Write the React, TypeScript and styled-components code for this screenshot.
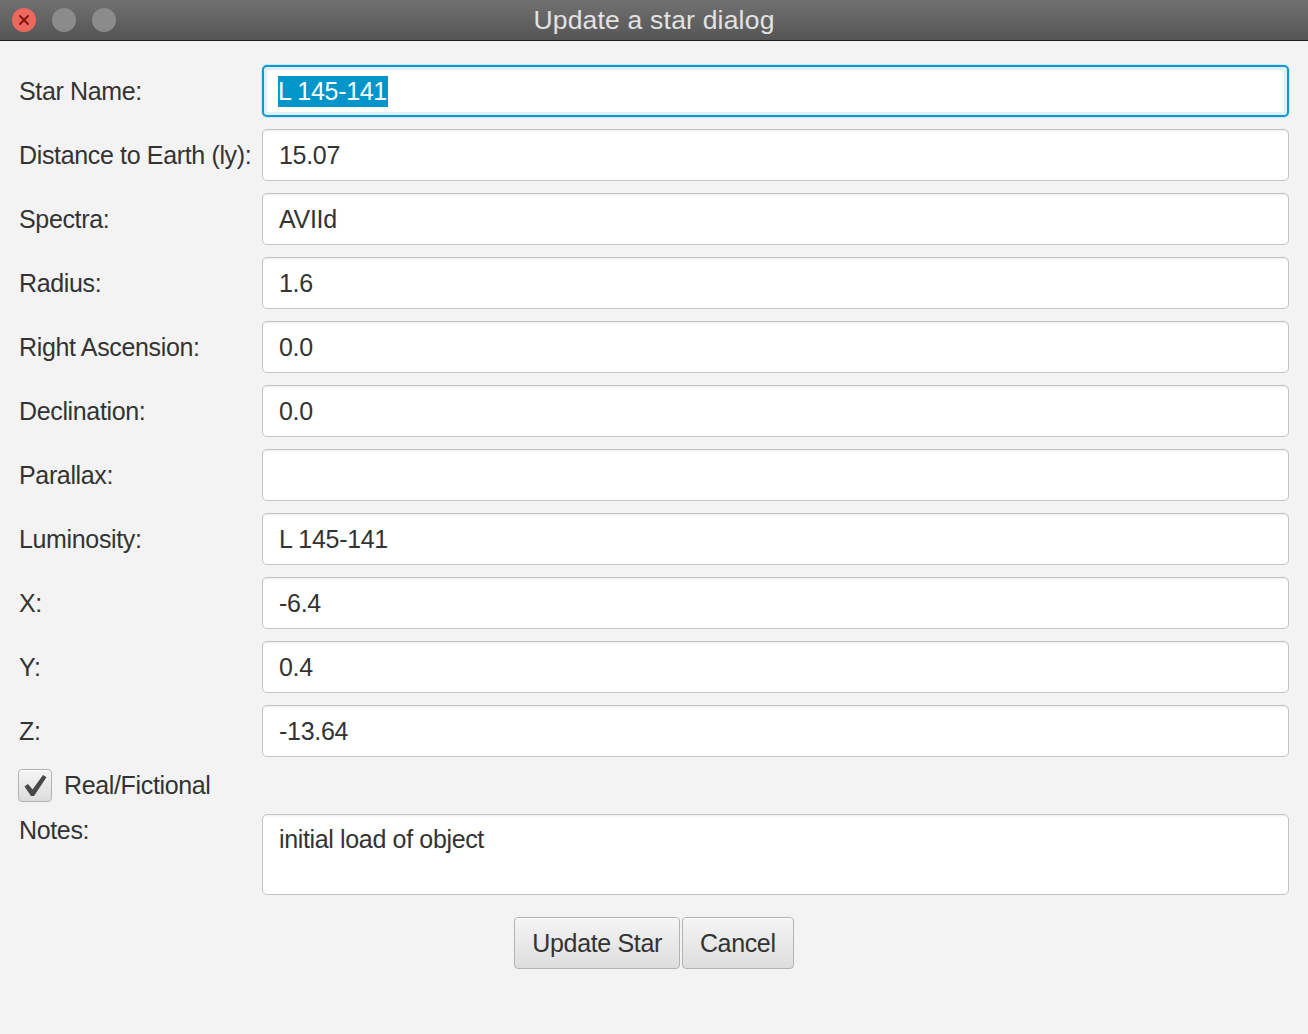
import React from "react";
import styled, { createGlobalStyle } from "styled-components";

const GlobalStyle = createGlobalStyle`
  html, body {
    margin: 0;
    padding: 0;
    background: #f3f3f3;
  }
  body {
    font-family: "Liberation Sans", Arial, sans-serif;
    color: #333333;
  }
`;

const fields = [
  { label: "Star Name:", value: "L 145-141", focused: true },
  { label: "Distance to Earth (ly):", value: "15.07" },
  { label: "Spectra:", value: "AVIId" },
  { label: "Radius:", value: "1.6" },
  { label: "Right Ascension:", value: "0.0" },
  { label: "Declination:", value: "0.0" },
  { label: "Parallax:", value: "" },
  { label: "Luminosity:", value: "L 145-141" },
  { label: "X:", value: "-6.4" },
  { label: "Y:", value: "0.4" },
  { label: "Z:", value: "-13.64" },
];

export default function App() {
  return (
    <>
      <GlobalStyle />
      <Window>
        <TitleBar>
          <Lights>
            <Light $close>
              <svg width="14" height="14" viewBox="0 0 14 14">
                <path d="M3 3 L11 11 M11 3 L3 11" stroke="#7e130c" strokeWidth="1.8" strokeLinecap="round" />
              </svg>
            </Light>
            <Light />
            <Light />
          </Lights>
          <Title>Update a star dialog</Title>
        </TitleBar>
        <Body>
          <FormGrid>
            {fields.map((f) => (
              <React.Fragment key={f.label}>
                <Label>{f.label}</Label>
                <Field $focused={f.focused}>
                  {f.focused ? <Selected>{f.value}</Selected> : f.value}
                </Field>
              </React.Fragment>
            ))}
            <CheckRow>
              <CheckBox>
                <svg width="25" height="23" viewBox="0 0 25 23">
                  <path d="M1.5 12.5 L5 10 L9.5 15.5 L20 1 L23.5 3.2 L11 22 L8 22 Z" fill="#484848" />
                </svg>
              </CheckBox>
              <CheckLabel>Real/Fictional</CheckLabel>
            </CheckRow>
            <Label $top>Notes:</Label>
            <NotesArea>initial load of object</NotesArea>
          </FormGrid>
          <ButtonBar>
            <Button>Update Star</Button>
            <Button>Cancel</Button>
          </ButtonBar>
        </Body>
      </Window>
    </>
  );
}

const Window = styled.div`
  width: 1308px;
  height: 1034px;
  display: flex;
  flex-direction: column;
  background: #f3f3f3;
`;

const TitleBar = styled.div`
  position: relative;
  height: 40px;
  flex-shrink: 0;
  display: flex;
  align-items: center;
  justify-content: center;
  background: linear-gradient(#717171, #555555);
  border-bottom: 1px solid #1e1e1e;
`;

const Lights = styled.div`
  position: absolute;
  left: 12px;
  top: 8px;
  display: flex;
  gap: 16px;
`;

const Light = styled.div<{ $close?: boolean }>`
  width: 24px;
  height: 24px;
  border-radius: 50%;
  background: ${(p) => (p.$close ? "#ec675c" : "#8b8b8b")};
  display: flex;
  align-items: center;
  justify-content: center;
`;

const Title = styled.div`
  font-size: 26.5px;
  color: #e2e2e2;
  letter-spacing: 0.2px;
  margin-top: 1px;
`;

const Body = styled.div`
  padding: 24px 19px 0 19px;
  display: flex;
  flex-direction: column;
`;

const FormGrid = styled.div`
  display: grid;
  grid-template-columns: 243px 1fr;
  row-gap: 12px;
`;

const Label = styled.div<{ $top?: boolean }>`
  font-size: 25px;
  color: #333333;
  align-self: ${(p) => (p.$top ? "start" : "center")};
  padding-top: ${(p) => (p.$top ? "2px" : "0")};
  white-space: nowrap;
  letter-spacing: -0.35px;
`;

const Field = styled.div<{ $focused?: boolean }>`
  height: 52px;
  box-sizing: border-box;
  display: flex;
  align-items: center;
  padding-left: ${(p) => (p.$focused ? "14px" : "16px")};
  font-size: 25px;
  color: #333333;
  background: #ffffff;
  border-radius: 5px;
  border: ${(p) => (p.$focused ? "2px solid #0a9ad2" : "1px solid #c4c4c4")};
  box-shadow: ${(p) =>
    p.$focused
      ? "inset 0 0 0 3px #dff0f9, 0 0 0 1px #cfe7f3"
      : "inset 0 2px 2px -1px rgba(0,0,0,0.08)"};
  letter-spacing: -0.3px;
`;

const Selected = styled.span`
  background: #0096c9;
  color: #ffffff;
  line-height: 31px;
  padding-right: 1px;
`;

const CheckRow = styled.div`
  grid-column: 1 / span 2;
  display: flex;
  align-items: center;
  gap: 12px;
  height: 33px;
  margin-left: -1px;
`;

const CheckBox = styled.div`
  width: 34px;
  height: 33px;
  box-sizing: border-box;
  border: 1px solid #b2b2b2;
  border-radius: 4px;
  background: linear-gradient(#f6f6f6, #dcdcdc);
  box-shadow: inset 0 1px 0 #ffffff;
  display: flex;
  align-items: center;
  justify-content: center;
`;

const CheckLabel = styled.div`
  font-size: 25px;
  color: #333333;
  letter-spacing: -0.35px;
`;

const NotesArea = styled.div`
  height: 81px;
  box-sizing: border-box;
  padding: 10px 16px;
  font-size: 25px;
  color: #333333;
  background: #ffffff;
  border-radius: 5px;
  border: 1px solid #c4c4c4;
  box-shadow: inset 0 2px 2px -1px rgba(0,0,0,0.08);
  letter-spacing: -0.35px;
`;

const ButtonBar = styled.div`
  display: flex;
  justify-content: center;
  gap: 2px;
  margin-top: 22px;
`;

const Button = styled.button`
  height: 52px;
  padding: 0 17px;
  font-family: "Liberation Sans", Arial, sans-serif;
  font-size: 25px;
  color: #333333;
  border: 1px solid #b3b3b3;
  border-radius: 4px;
  background: linear-gradient(#f5f5f5, #dddddd);
  box-shadow: inset 0 1px 0 #ffffff;
  letter-spacing: -0.35px;
  cursor: pointer;
`;
